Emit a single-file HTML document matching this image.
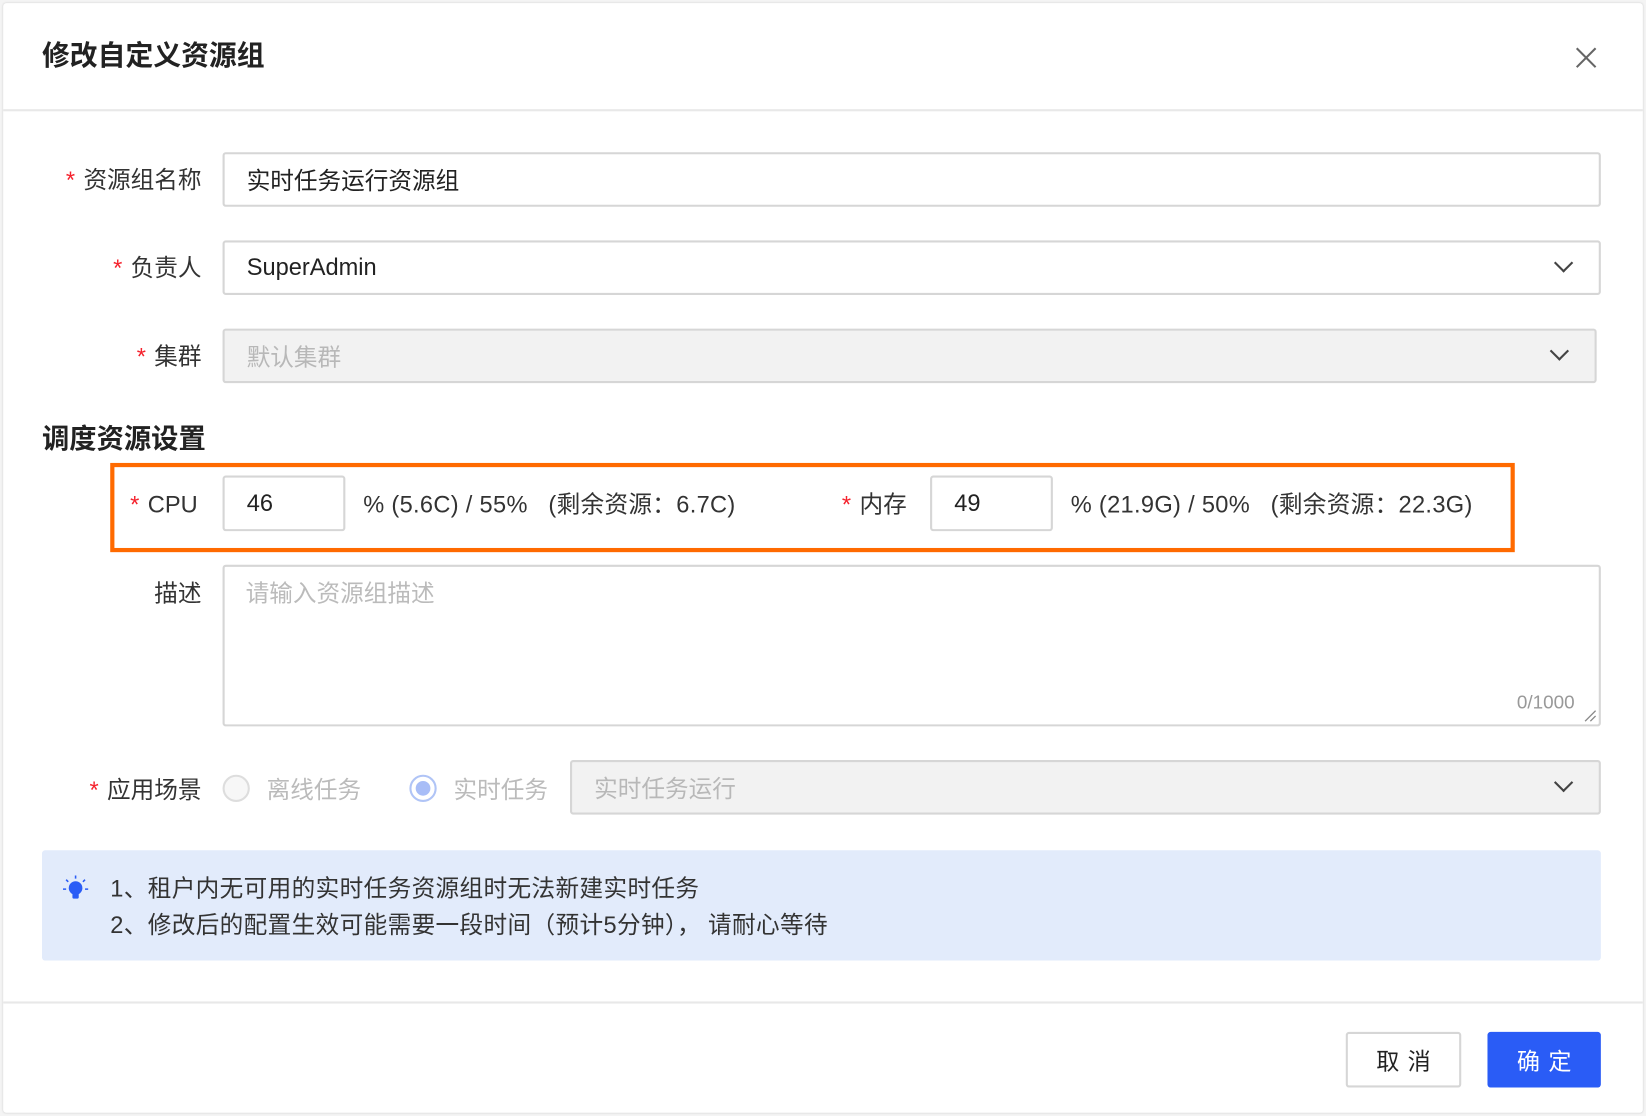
<!DOCTYPE html>
<html><head><meta charset="utf-8"><style>
html,body{margin:0;padding:0;background:#f4f4f4;width:1646px;height:1116px;overflow:hidden}
#w{position:absolute;left:0;top:0;width:1568px;height:1063px;transform:scale(1.04974);transform-origin:0 0;font-family:"Liberation Sans","Noto Sans CJK SC",sans-serif;color:#333}
.modal{position:absolute;left:3px;top:3px;width:1562px;height:1057px;background:#fff;border-radius:3px;box-shadow:0 0 2px rgba(0,0,0,.15)}
.a{position:absolute}
.lbl{position:absolute;font-size:22.5px;line-height:30px;color:#333;text-align:right;white-space:nowrap}
.lbl b{color:#f5222d;font-weight:normal;margin-right:8px}
.inp{position:absolute;border:2px solid #d6d6d6;border-radius:3px;box-sizing:border-box;background:#fff;font-size:22.5px;color:#222;padding-left:21px;display:flex;align-items:center}
.dis{background:#f2f2f2;color:#b8b8b8}
.t{position:absolute;font-size:22.5px;line-height:30px;white-space:nowrap;color:#333}
.chev{position:absolute;width:11px;height:11px;border-right:2px solid #444;border-bottom:2px solid #444;transform:rotate(45deg)}
</style></head><body><div id="w">
<div class="modal"></div>
<div class="t" style="left:40px;top:38px;font-size:26.5px;font-weight:bold;color:#222">修改自定义资源组</div>
<svg class="a" style="left:1500px;top:44px" width="22" height="22"><path d="M2 2L20 20M20 2L2 20" stroke="#666" stroke-width="2"/></svg>
<div class="a" style="left:3px;top:104px;width:1562px;height:2px;background:#e8e8e8"></div>

<div class="lbl" style="right:1376px;top:157px"><b>*</b>资源组名称</div>
<div class="inp" style="left:212px;top:145px;width:1313px;height:52px">实时任务运行资源组</div>

<div class="lbl" style="right:1376px;top:241px"><b>*</b>负责人</div>
<div class="inp" style="left:212px;top:229px;width:1313px;height:52px">SuperAdmin</div>
<div class="chev" style="left:1483px;top:244px"></div>

<div class="lbl" style="right:1376px;top:325px"><b>*</b>集群</div>
<div class="inp dis" style="left:212px;top:313px;width:1309px;height:52px">默认集群</div>
<div class="chev" style="left:1479px;top:328px"></div>

<div class="t" style="left:40px;top:403px;font-size:26px;font-weight:bold;color:#222">调度资源设置</div>

<div class="a" style="left:105px;top:441px;width:1330px;height:77px;border:4px solid #ff6a00"></div>
<div class="lbl" style="left:124px;top:466px"><b>*</b>CPU</div>
<div class="inp" style="left:212px;top:453px;width:117px;height:53px">46</div>
<div class="t" style="left:346px;top:466px;letter-spacing:0.3px">% (5.6C) / 55% &nbsp; (剩余资源：6.7C)</div>
<div class="lbl" style="left:802px;top:466px"><b>*</b>内存</div>
<div class="inp" style="left:886px;top:453px;width:117px;height:53px">49</div>
<div class="t" style="left:1020px;top:466px;letter-spacing:0.3px">% (21.9G) / 50% &nbsp; (剩余资源：22.3G)</div>

<div class="lbl" style="right:1376px;top:551px">描述</div>
<div class="inp" style="left:212px;top:538px;width:1313px;height:154px"></div>
<div class="t" style="left:234px;top:551px;color:#bbb">请输入资源组描述</div>
<div class="t" style="left:1445px;top:654px;font-size:18px;color:#999">0/1000</div>
<svg class="a" style="left:1508px;top:675px" width="14" height="14"><path d="M2 12L12 2M7 12L12 7" stroke="#888" stroke-width="1.3"/></svg>

<div class="lbl" style="right:1376px;top:738px"><b>*</b>应用场景</div>
<div class="a" style="left:212px;top:738px;width:22px;height:22px;border:2px solid #ddd;border-radius:50%;background:#f7f7f7"></div>
<div class="t" style="left:254px;top:738px;color:#bbb">离线任务</div>
<div class="a" style="left:390px;top:738px;width:22px;height:22px;border:2px solid #b0c4f6;border-radius:50%;background:#fff"></div>
<div class="a" style="left:396px;top:744px;width:14px;height:14px;border-radius:50%;background:#a8bdf7"></div>
<div class="t" style="left:432px;top:738px;color:#bbb">实时任务</div>
<div class="inp dis" style="left:543px;top:724px;width:982px;height:52px">实时任务运行</div>
<div class="chev" style="left:1483px;top:739px"></div>

<div class="a" style="left:40px;top:810px;width:1485px;height:105px;background:#e2ebfb;border-radius:3px"></div>
<svg class="a" style="left:58px;top:832px" width="28" height="28"><g stroke="#2a5cf6" stroke-width="1.5"><path d="M14 2v3M5 6l2 2M23 6l-2 2M2 15h3M23 15h3"/></g><circle cx="14" cy="14" r="6.5" fill="#2a5cf6"/><rect x="11" y="19" width="6" height="5" rx="1" fill="#2a5cf6"/></svg>
<div class="t" style="left:105px;top:832px;letter-spacing:0.35px">1、租户内无可用的实时任务资源组时无法新建实时任务</div>
<div class="t" style="left:105px;top:867px;letter-spacing:0.35px">2、修改后的配置生效可能需要一段时间（预计5分钟）， 请耐心等待</div>

<div class="a" style="left:3px;top:954px;width:1562px;height:2px;background:#e8e8e8"></div>
<div class="a" style="left:1282px;top:983px;width:110px;height:53px;box-sizing:border-box;border:2px solid #d6d6d6;border-radius:3px;font-size:22px;display:flex;align-items:center;justify-content:center;letter-spacing:8px;color:#222;padding-left:8px">取消</div>
<div class="a" style="left:1417px;top:983px;width:108px;height:53px;background:#2a5cf6;border-radius:3px;font-size:22px;display:flex;align-items:center;justify-content:center;letter-spacing:8px;color:#fff;padding-left:8px;box-sizing:border-box">确定</div>
</div></body></html>
